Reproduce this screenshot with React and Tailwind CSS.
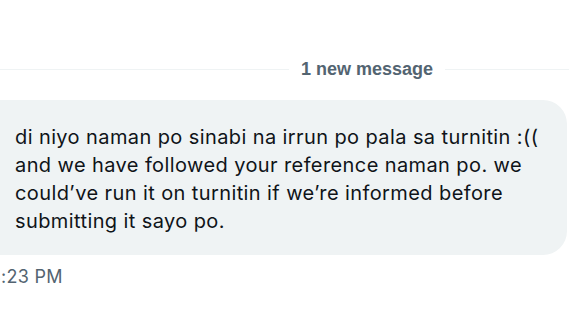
export default function App() {
  return (
    <div className="w-[569px] h-[320px] overflow-hidden bg-white font-['Inter','Liberation_Sans',Arial,sans-serif]">
      <div className="flex items-center pt-[59px]">
        <div className="flex-1 h-px bg-[#eff3f4]" />
        <span className="px-3 font-['Liberation_Sans',Arial,sans-serif] text-[18px] leading-5 font-bold text-[#536471]">1 new message</span>
        <div className="w-[124px] h-px bg-[#eff3f4]" />
      </div>
      <div className="mt-[21px] ml-[-30px] w-[597px] rounded-[24px] bg-[#eff3f4] pl-[45px] pr-2 pt-[23px] pb-[20px]">
        <p className="text-[20px] leading-[28px] tracking-[0.4px] text-[#0f1419] whitespace-nowrap">
          di niyo naman po sinabi na irrun po pala sa turnitin :((
          <br />
          and we have followed your reference naman po. we
          <br />
          could’ve run it on turnitin if we’re informed before
          <br />
          submitting it sayo po.
        </p>
      </div>
      <div className="mt-3 ml-[-11px] text-[18px] leading-5 tracking-[0.3px] text-[#536471]">4:23 PM</div>
    </div>
  );
}
